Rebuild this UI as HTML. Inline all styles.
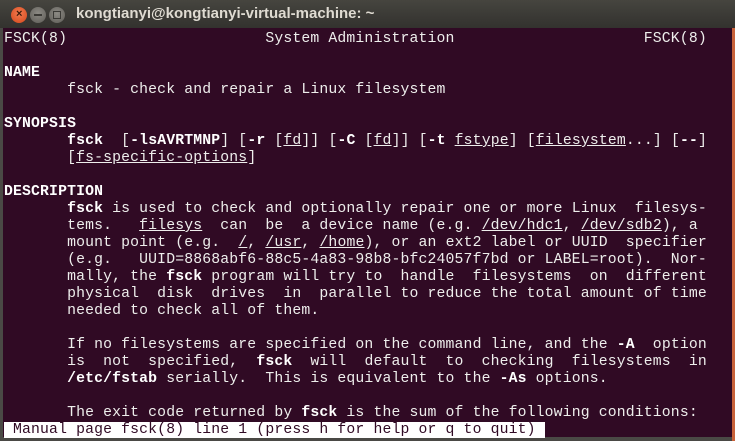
<!DOCTYPE html>
<html><head><meta charset="utf-8"><style>
html,body{margin:0;padding:0;width:735px;height:441px;overflow:hidden;background:#4a4945;}
#tb{position:absolute;left:0;top:0;width:735px;height:28px;background:linear-gradient(#46453f,#3a3935 60%,#33322e);}
.b{position:absolute;top:7px;width:16px;height:16px;border-radius:50%;}
#title{position:absolute;left:76px;top:5px;font:bold 15px "Liberation Sans",sans-serif;color:#dfdbd2;}
#term{position:absolute;left:3px;top:28px;width:729px;height:409px;background:#300a24;}
#edge{position:absolute;left:732px;top:28px;width:3px;height:413px;background:#c8623a;}
pre{position:absolute;left:4px;top:31px;margin:0;font:14.77px/17px "Liberation Mono",monospace;letter-spacing:0.15px;color:#eeeeec;}
b{font-weight:bold;color:#fff}
u{text-decoration:underline}
.st{background:#fff;color:#300a24;}
</style></head><body>
<div id="tb">
<div class="b" style="left:11px;background:radial-gradient(circle at 50% 40%,#f27b50,#d5471b);"><span style="position:absolute;left:5px;top:1px;font:bold 11px sans-serif;color:#3a1a0a">×</span></div>
<div class="b" style="left:30px;background:radial-gradient(circle at 50% 40%,#8c8a84,#5e5c57);"><span style="position:absolute;left:4px;top:7px;width:8px;height:2px;background:#3a3935"></span></div>
<div class="b" style="left:49px;background:radial-gradient(circle at 50% 40%,#8c8a84,#5e5c57);"><span style="position:absolute;left:4px;top:4px;width:6px;height:6px;border:1px solid #3a3935"></span></div>
<div id="title">kongtianyi@kongtianyi-virtual-machine: ~</div>
</div>
<div id="term"></div>
<div id="edge"></div>
<pre>FSCK(8)                      System Administration                     FSCK(8)

<b>NAME</b>
       fsck - check and repair a Linux filesystem

<b>SYNOPSIS</b>
       <b>fsck</b>  [<b>-lsAVRTMNP</b>] [<b>-r</b> [<u>fd</u>]] [<b>-C</b> [<u>fd</u>]] [<b>-t</b> <u>fstype</u>] [<u>filesystem</u>...] [<b>--</b>]
       [<u>fs-specific-options</u>]

<b>DESCRIPTION</b>
       <b>fsck</b> is used to check and optionally repair one or more Linux  filesys-
       tems.   <u>filesys</u>  can  be  a device name (e.g. <u>/dev/hdc1</u>, <u>/dev/sdb2</u>), a
       mount point (e.g.  <u>/</u>, <u>/usr</u>, <u>/home</u>), or an ext2 label or UUID  specifier
       (e.g.   UUID=8868abf6-88c5-4a83-98b8-bfc24057f7bd or LABEL=root).  Nor-
       mally, the <b>fsck</b> program will try to  handle  filesystems  on  different
       physical  disk  drives  in  parallel to reduce the total amount of time
       needed to check all of them.

       If no filesystems are specified on the command line, and the <b>-A</b>  option
       is  not  specified,  <b>fsck</b>  will  default  to  checking  filesystems  in
       <b>/etc/fstab</b> serially.  This is equivalent to the <b>-As</b> options.

       The exit code returned by <b>fsck</b> is the sum of the following conditions:
<span class="st"> Manual page fsck(8) line 1 (press h for help or q to quit) </span></pre>
</body></html>
